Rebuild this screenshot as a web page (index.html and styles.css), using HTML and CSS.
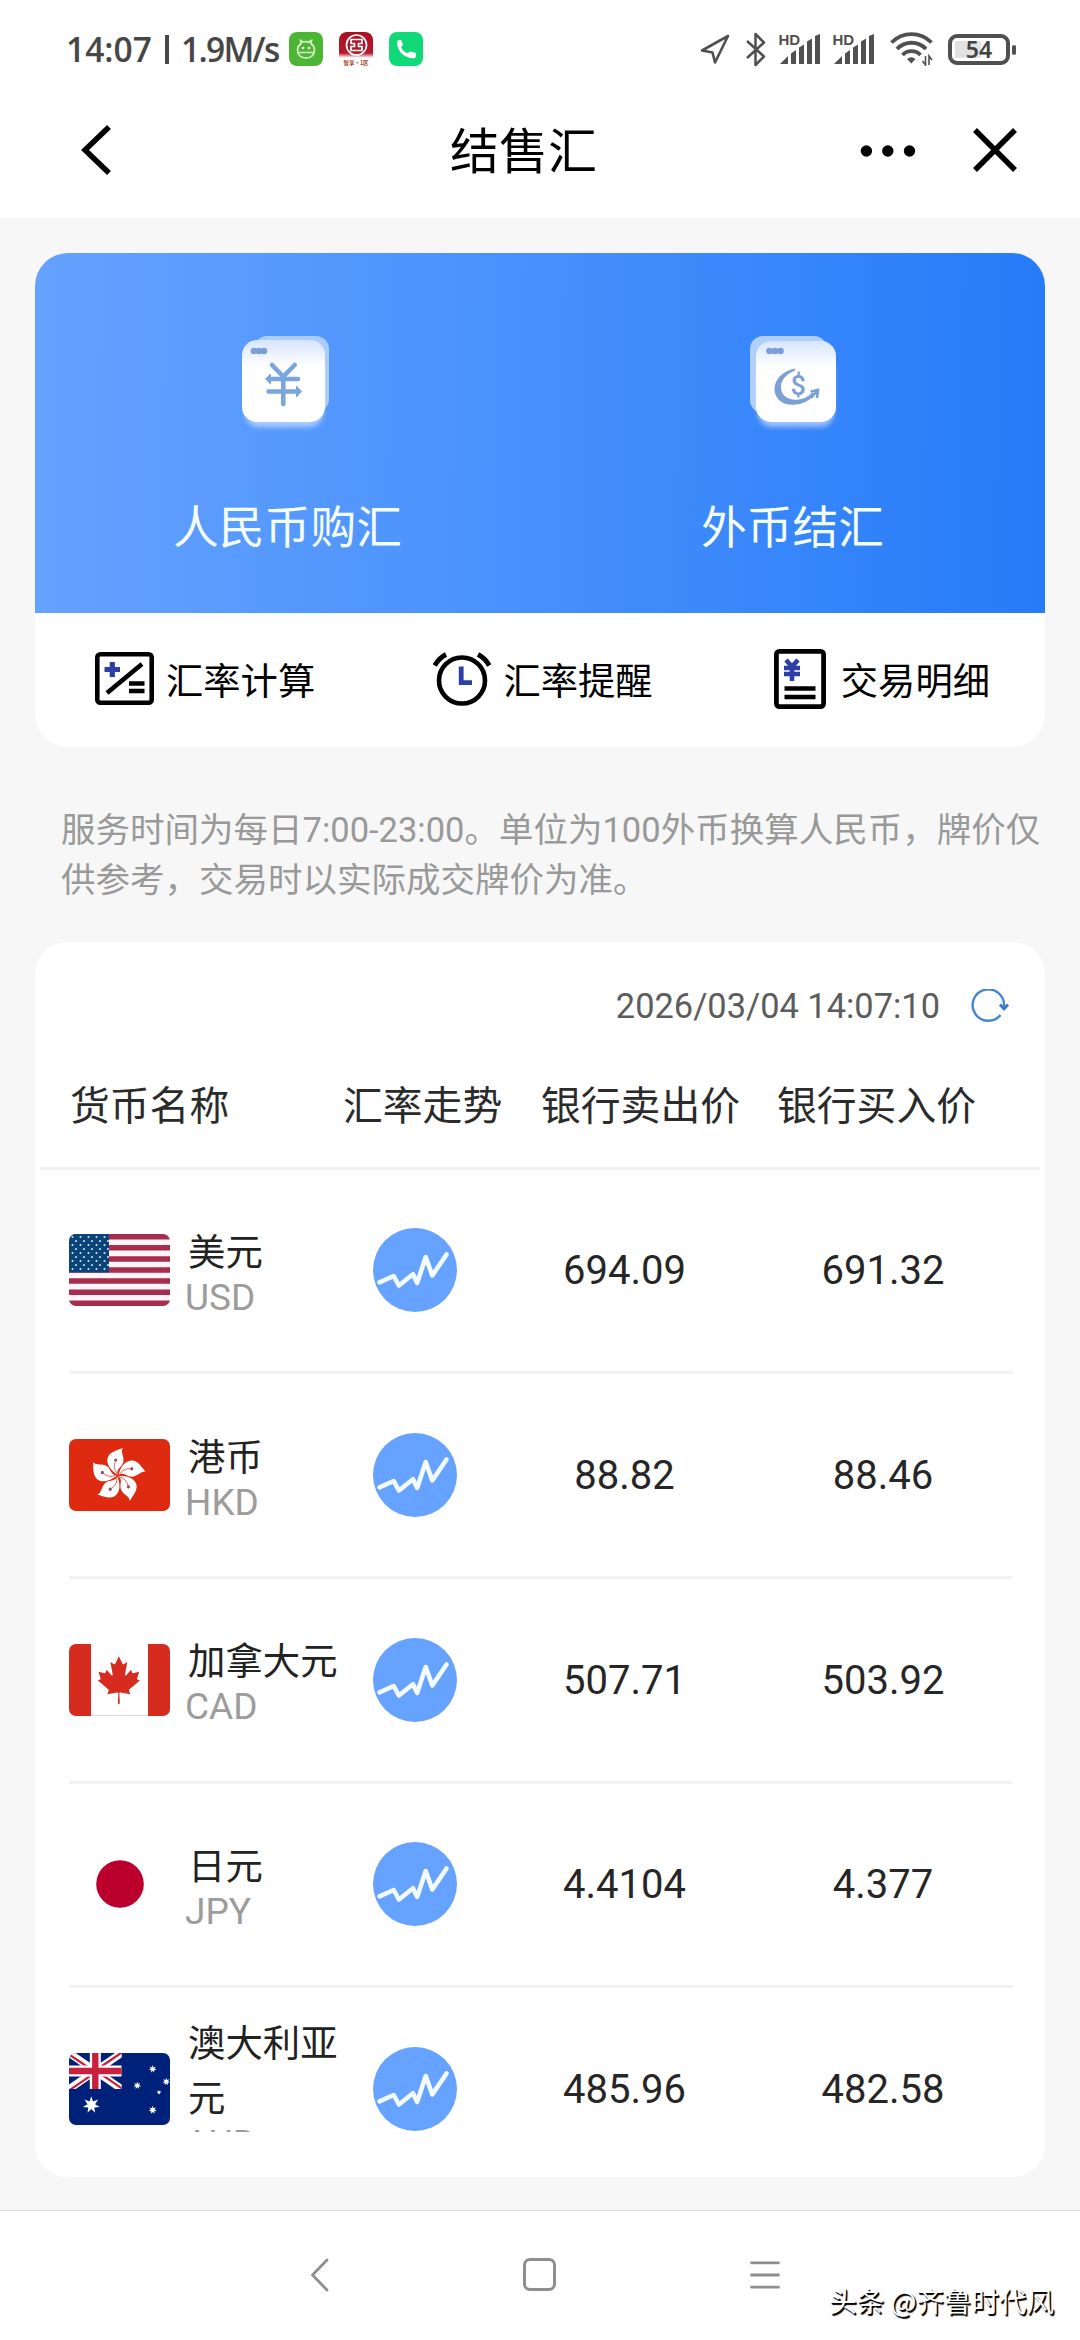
FILE: index.html
```html
<!DOCTYPE html>
<html lang="zh-CN">
<head>
<meta charset="utf-8">
<title>结售汇</title>
<link rel="stylesheet" href="styles.css">
</head>
<body>
<svg class="defs" width="0" height="0" aria-hidden="true">
  <defs>
    <linearGradient id="sheet" x1="0" y1="0" x2="0" y2="1">
      <stop offset="0" stop-color="#d6e5fd"/><stop offset=".32" stop-color="#fff"/>
    </linearGradient>
    <linearGradient id="bank" x1="0" y1="0" x2="0" y2="1">
      <stop offset="0" stop-color="#a80f22"/><stop offset=".62" stop-color="#b8182a"/><stop offset=".76" stop-color="#fff"/>
    </linearGradient>
    <filter id="soft" x="-20%" y="-20%" width="140%" height="140%"><feGaussianBlur stdDeviation="2.5"/></filter>
    <pattern id="stars" width="8" height="8" patternUnits="userSpaceOnUse">
      <circle cx="3.500" cy="3" r="1" fill="#d5e6f5"/><circle cx="7" cy="7" r="1" fill="#d5e6f5"/>
    </pattern>
    <clipPath id="flagclip"><rect width="101" height="72" rx="7"/></clipPath>
    <symbol id="trend" viewBox="0 0 84 84">
      <circle cx="42" cy="42" r="42" fill="#66a2ff"/>
      <path d="M6.500 54.300 20.700 48l5.200 9.500L40 46.300l4.200 8.600L52.700 29l6.600 18.500L73.500 26.500" fill="none" stroke="#f2fbff" stroke-width="4.600" stroke-linecap="round" stroke-linejoin="round"/>
    </symbol>
    <symbol id="signal" viewBox="0 0 42 32" overflow="visible">
      <path d="M1 31 9 23V31ZM12 20.500l5-3.500V31h-5ZM20 14.500l5-3V31h-5ZM28 8.500l5-3V31h-5ZM36 3l5-2V31h-5Z" fill="#505050"/>
      <text x="-.5" y="11.500" class="hd">HD</text>
    </symbol>
    <path id="star7" d="M0-1 .195-.405.782-.623.439-.1.975.223.352.281.434.901 0 .45-.434.901-.352.281-.975.223-.439-.1-.782-.623-.195-.405Z" fill="#fff"/>
    <g id="petal">
      <path d="M0-1C-6-4-13-12-9.500-19-7-24 0-25.500 5-27.500 2.500-23 7-19 5.500-13 4-8-2-7 0-1Z" fill="#fff"/>
      <path d="M0-2C-3.500-5-4.500-10-2-15" fill="none" stroke="#d9483a" stroke-width=".8"/>
      <circle cx="-2" cy="-15.500" r="1.600" fill="#8f4a6c"/>
    </g>
  </defs>
</svg>

<div class="screen">
  <div class="status">
    <span class="clock">14:07</span><span class="bar"></span><span class="speed">1.9M/s</span>
    <svg class="app" viewBox="0 0 34 34"><rect width="34" height="34" rx="8" fill="#4db534"/><g fill="none" stroke="#d8f5c8" stroke-width="1.700"><path d="M8.500 18a8.500 8.500 0 0 1 3.500-6.500L11.500 8.500l3 1.500a10 10 0 0 1 5 0l3-1.500-.5 3A8.500 8.500 0 0 1 25.500 18c0 5-3.500 8-8.500 8s-8.500-3-8.500-8ZM9 20.500h16"/></g><circle cx="14" cy="16" r="1.300" fill="#fff"/><circle cx="20" cy="16" r="1.300" fill="#fff"/></svg>
    <svg class="app" viewBox="0 0 34 34"><rect width="34" height="34" rx="8" fill="url(#bank)"/><g fill="none" stroke="#fff" stroke-width="1.700"><circle cx="17.500" cy="13" r="10"/><path d="M12 7.500h11v4h-3.500v3H23v4H12v-4h3.500v-3H12Z"/></g><text x="17" y="32.500" class="micro">智享·1区</text></svg>
    <svg class="app" viewBox="0 0 34 34"><rect width="34" height="34" rx="8" fill="#12d978"/><path d="M8 9.500c0-1.200 4-2 4.700-.8l1.300 4.500-2 1.800c1 3 3.500 5.300 6.800 6.300l2-1.800 5.500 1.200c1.200.4.8 5-.5 5.300C16.500 27.500 7.500 19.500 8 9.500Z" fill="#fff"/></svg>
    <svg class="loc" viewBox="0 0 30 31"><path d="M28 2 2 16.500l10.500 2L15 28.500Z" fill="none" stroke="#505050" stroke-width="2.600" stroke-linejoin="round"/></svg>
    <svg class="bt" viewBox="0 0 22 35"><path d="M2 9l17 15.500L10.500 33V2L19 10.500 2 26" fill="none" stroke="#505050" stroke-width="2.500" stroke-linejoin="round"/></svg>
    <svg class="sig"><use href="#signal"/></svg>
    <svg class="sig"><use href="#signal"/></svg>
    <svg class="wifi" viewBox="0 0 43 34"><g fill="none" stroke="#505050" stroke-width="3.800"><path d="M1.500 10.500a28 28 0 0 1 40 0M7 17a20 20 0 0 1 29 0M12.500 23a12.500 12.500 0 0 1 18 0"/></g><path d="M17 27q4.500-3.500 8.500 0l-4.200 4.500Z" fill="#505050"/><path d="M35.500 24v9l-3-4M39 33v-9l3 4" fill="none" stroke="#505050" stroke-width="1.600"/></svg>
    <span class="battery"><span class="pct">54</span></span>
  </div>

  <header class="titlebar">
    <svg class="back" viewBox="0 0 31 52"><path d="M28 3 4 26l24 23" fill="none" stroke="#000" stroke-width="5.500"/></svg>
    <h1>结售汇</h1>
    <svg class="more" viewBox="0 0 56 12"><circle cx="6.400" cy="6" r="5.700"/><circle cx="27.800" cy="6" r="5.700"/><circle cx="49.500" cy="6" r="5.700"/></svg>
    <svg class="close" viewBox="0 0 44 44"><path d="M2 2l40 40M42 2 2 42" stroke="#000" stroke-width="5.500"/></svg>
  </header>

  <main>
    <section class="card trade">
      <div class="hero">
        <div class="tile">
          <svg class="tile-icon first" viewBox="0 0 88 98"><rect x="3" y="20" width="78" height="71" rx="14" fill="#fff" opacity=".5" filter="url(#soft)"/><rect x="12" y="0" width="75" height="76" rx="13" fill="#fff" opacity=".5"/><rect y="4" width="83" height="82" rx="15" fill="url(#sheet)"/><g fill="#7b9edb"><circle cx="12" cy="15" r="3.300"/><circle cx="17" cy="15" r="3.300"/><circle cx="22" cy="15" r="3.300"/></g><path d="M30 29l11.300 11.500L52.700 29M41.300 40v28M28 43h28M26.500 55.500h28" fill="none" stroke="#7aa5dd" stroke-width="4.600" stroke-linecap="round"/><path d="M23.500 43l5-5v10ZM59.500 55.500l-5-5.500v11Z" fill="#7aa5dd" stroke="#7aa5dd" stroke-linejoin="round"/></svg>
          <span>人民币购汇</span>
        </div>
        <div class="tile">
          <svg class="tile-icon" viewBox="0 0 88 98"><rect x="8" y="20" width="76" height="71" rx="14" fill="#fff" opacity=".5" filter="url(#soft)"/><rect width="77" height="77" rx="13" fill="#fff" opacity=".6"/><rect x="6" y="5" width="80" height="81" rx="15" fill="url(#sheet)"/><g fill="#7b9edb"><circle cx="19.500" cy="15" r="3.300"/><circle cx="25" cy="15" r="3.300"/><circle cx="30.500" cy="15" r="3.300"/></g><path d="M45 32.500C32 35 24.500 44 24.500 53c0 10 8 16 18.500 15.800 9-.2 17.500-4.300 21.500-10.800l-2-1.500C58 61 53 63.500 47 63.700 37 64 31 59 31 51c0-7 5-13 14-16.500Z" fill="#7aa0d4"/><path d="M60.500 55.500l7.500-1.500-1 8M67.500 54.500 61 62" fill="none" stroke="#7aa0d4" stroke-width="2.600"/><text x="48.300" y="59" class="dollar">$</text></svg>
          <span>外币结汇</span>
        </div>
      </div>
      <nav class="actions">
        <a class="action"><svg width="59" height="53" viewBox="0 0 59 53"><rect x="2.300" y="2.300" width="54.400" height="48.400" rx="3" fill="none" stroke="#000" stroke-width="4.600"/><path d="M12 41 47 12" stroke="#000" stroke-width="4.600"/><path d="M34 31.500h15.500M34 39h15.500" stroke="#000" stroke-width="4.600"/><path d="M9.500 17.500h15.500M17.300 10v15" stroke="#2b3fa6" stroke-width="5.200"/></svg><span>汇率计算</span></a>
        <a class="action mid"><svg width="58" height="54" viewBox="0 0 58 54"><circle cx="29" cy="28.500" r="23" fill="none" stroke="#000" stroke-width="4.600"/><path d="M1.800 13.500Q6 6 13 2.500M56.200 13.500Q52 6 45 2.500" fill="none" stroke="#000" stroke-width="4.800"/><path d="M28.200 14.500v16.200H39" fill="none" stroke="#2b3fa6" stroke-width="4.800"/></svg><span>汇率提醒</span></a>
        <a class="action wide"><svg width="52" height="60" viewBox="0 0 52 60"><rect x="2.400" y="2.400" width="47.200" height="55.200" rx="3" fill="none" stroke="#000" stroke-width="4.800"/><path d="M10.500 39.500h31M10.500 48h31" stroke="#000" stroke-width="4.600"/><path d="M12 11l6 6.500 6-6.500M10 19h16M10 25h16M18 17v15" fill="none" stroke="#2b3fa6" stroke-width="4.600"/></svg><span>交易明细</span></a>
      </nav>
    </section>

    <p class="notice">服务时间为每日7:00-23:00。单位为100外币换算人民币，牌价仅<br>供参考，交易时以实际成交牌价为准。</p>

    <section class="card rates">
      <div class="stamp"><time>2026/03/04 14:07:10</time><svg width="39" height="34" viewBox="0 0 39 34"><path d="M30.500 26A15.700 15.700 0 1 1 34 17v2" fill="none" stroke="#4585cf" stroke-width="2.400"/><path d="M30 15.500l4 4.500 4-4.500" fill="none" stroke="#3b77cc" stroke-width="2.800"/></svg></div>
      <div class="cols head"><span>货币名称</span><span>汇率走势</span><span>银行卖出价</span><span>银行买入价</span></div>
      <div class="list">
        <div class="cols row">
          <div class="cur"><svg class="flag" viewBox="0 0 101 72"><g clip-path="url(#flagclip)"><rect width="101" height="72" fill="#fff5f8"/><path d="M0 2.770h101M0 13.850h101M0 24.930h101M0 36h101M0 47.080h101M0 58.160h101M0 69.240h101" stroke="#a62e4c" stroke-width="5.540"/><rect width="40" height="38.500" fill="#0b4479"/><rect width="40" height="37" fill="url(#stars)"/></g></svg><div class="label"><b>美元</b><i>USD</i></div></div>
          <svg class="trend"><use href="#trend"/></svg><span class="num">694.09</span><span class="num">691.32</span>
        </div>
        <div class="cols row">
          <div class="cur"><svg class="flag" viewBox="0 0 101 72"><rect width="101" height="72" rx="7" fill="#de2a10"/><g transform="translate(48.700 36.500)"><use href="#petal"/><use href="#petal" transform="rotate(72)"/><use href="#petal" transform="rotate(144)"/><use href="#petal" transform="rotate(216)"/><use href="#petal" transform="rotate(288)"/></g></svg><div class="label"><b>港币</b><i>HKD</i></div></div>
          <svg class="trend"><use href="#trend"/></svg><span class="num">88.82</span><span class="num">88.46</span>
        </div>
        <div class="cols row">
          <div class="cur"><svg class="flag" viewBox="0 0 101 72"><g clip-path="url(#flagclip)"><rect width="101" height="72" fill="#fff"/><path d="M22 71.600h57" stroke="#ccc" stroke-width=".8"/><path d="M0 0h22v72H0ZM79 0h22v72H79Z" fill="#d52c1f"/><path transform="translate(-4.400 7.650) scale(.0113 .01175)" fill="#d52c1f" d="m4890 4430-45-863a95 95 0 0 1 111-98l859 151-116-320a65 65 0 0 1 20-73l941-762-212-99a65 65 0 0 1-34-79l186-572-542 115a65 65 0 0 1-73-38l-105-247-423 454a65 65 0 0 1-111-57l204-1052-327 189a65 65 0 0 1-91-27l-332-652-332 652a65 65 0 0 1-91 27l-327-189 204 1052a65 65 0 0 1-111 57l-423-454-105 247a65 65 0 0 1-73 38l-542-115 186 572a65 65 0 0 1-34 79l-212 99 941 762a65 65 0 0 1 20 73l-116 320 859-151a95 95 0 0 1 111 98l-45 863z"/></g></svg><div class="label"><b>加拿大元</b><i>CAD</i></div></div>
          <svg class="trend"><use href="#trend"/></svg><span class="num">507.71</span><span class="num">503.92</span>
        </div>
        <div class="cols row">
          <div class="cur"><svg class="flag" viewBox="0 0 101 72"><rect width="101" height="72" rx="7" fill="#fff"/><circle cx="51" cy="36" r="23.800" fill="#bc002d"/></svg><div class="label"><b>日元</b><i>JPY</i></div></div>
          <svg class="trend"><use href="#trend"/></svg><span class="num">4.4104</span><span class="num">4.377</span>
        </div>
        <div class="cols row">
          <div class="cur"><svg class="flag" viewBox="0 0 101 72"><g clip-path="url(#flagclip)"><rect width="101" height="72" fill="#00217a"/><svg width="52.700" height="36" viewBox="0 0 52.700 36"><path d="M0 0l52.700 36M52.700 0 0 36" stroke="#fff" stroke-width="7.500"/><path d="M0 1.500 23 17M0 37.500l24-16.400M30 15 52.700-.5M29 19l24 16.500" stroke="#c8213f" stroke-width="2.200"/><path d="M26.300 0v36M0 18h52.700" stroke="#fff" stroke-width="11"/><path d="M26.300 0v36M0 18h52.700" stroke="#c8213f" stroke-width="6.400"/></svg><use href="#star7" transform="translate(22.300 52) scale(8.700)"/><use href="#star7" transform="translate(83.700 16) scale(4)"/><use href="#star7" transform="translate(97.300 28.700) scale(4)"/><use href="#star7" transform="translate(68.300 32.500) scale(4)"/><use href="#star7" transform="translate(90 39.300) scale(2.400)"/><use href="#star7" transform="translate(83.700 57) scale(4.200)"/></g></svg><div class="label"><b>澳大利亚元</b><i>AUD</i></div></div>
          <svg class="trend"><use href="#trend"/></svg><span class="num">485.96</span><span class="num">482.58</span>
        </div>
      </div>
    </section>
  </main>

  <footer class="sysnav">
    <svg class="nav-back" viewBox="0 0 19 34"><path d="M17 2 2.500 17 17 32" fill="none" stroke="#8e8e8e" stroke-width="2.800" stroke-linecap="round" stroke-linejoin="round"/></svg>
    <span class="nav-home"></span>
    <svg class="nav-menu" viewBox="0 0 30 28"><path d="M1.500 1.800h27M1.500 14h27M1.500 26.200h27" stroke="#8e8e8e" stroke-width="2.800" stroke-linecap="round"/></svg>
    <span class="credit">头条 @齐鲁时代风</span>
  </footer>
</div>
</body>
</html>
```
FILE: styles.css
```css
* { box-sizing: border-box; }
body {
  margin: 0;
  background: #fff;
  color: #000;
  font-family: Roboto, "Noto Sans CJK SC", sans-serif;
}
svg { display: block; flex: none; }
.defs { position: absolute; }

.screen {
  width: 1080px;
  height: 2340px;
  display: flex;
  flex-direction: column;
  background: #f7f7f7;
  overflow: hidden;
}

/* system status bar */
.status {
  height: 84px;
  padding: 14px 64px 0 66px;
  display: flex;
  align-items: center;
  background: #fff;
  color: #474747;
  font: 600 33.500px/40px "Open Sans", sans-serif;
}
.clock { width: 99px; }
.bar { width: 4px; height: 29px; background: #474747; margin-right: 12px; }
.speed { width: 108px; letter-spacing: -1.700px; }
.app { width: 34px; height: 34px; margin-right: 16px; }
.micro { font: 700 5.500px "Noto Sans CJK SC", sans-serif; fill: #a5402c; text-anchor: middle; }
.loc { width: 30px; height: 31px; margin-left: auto; margin-right: 15px; }
.bt { width: 22px; height: 35px; margin-right: 12px; }
.sig { width: 42px; height: 32px; margin-right: 12px; overflow: visible; }
.hd { font: 700 15px "Liberation Sans", sans-serif; fill: #505050; }
.wifi { width: 43px; height: 34px; margin: 0 15px 0 3px; }
.battery {
  position: relative;
  width: 62px;
  height: 31px;
  margin-right: 6px;
  border: 4px solid #505050;
  border-radius: 9px;
  background: linear-gradient(90deg, #e2e2e2 55%, #fff 55%) 3px 3px / 48px 17px no-repeat;
  display: flex;
  align-items: center;
  justify-content: center;
}
.battery::after {
  content: "";
  position: absolute;
  left: 60px;
  top: 7px;
  width: 4px;
  height: 10px;
  border-radius: 2px;
  background: #505050;
}
.pct { font: 600 23px/23px "Noto Sans", sans-serif; color: #444; }

/* page title bar */
.titlebar {
  height: 134px;
  padding: 0 63.500px 0 81px;
  display: flex;
  align-items: center;
  background: #fff;
}
.back { width: 31px; height: 52px; margin-top: -3px; }
.titlebar h1 {
  width: 160px;
  margin: -6px 0 0 338px;
  font: 400 49px/60px "Noto Sans CJK SC", sans-serif;
}
.more { width: 56px; height: 12px; margin-left: auto; margin-right: 57px; }
.close { width: 44px; height: 44px; margin-top: -3px; }

main { flex: 1; padding: 35px 35px 0; }
.card { width: 1010px; background: #fff; border-radius: 33px; overflow: hidden; }

.trade { height: 494px; }
.hero {
  height: 360px;
  display: grid;
  grid-template-columns: 1fr 1fr;
  background: linear-gradient(91deg, #65a2ff, #4790fc 50%, #267bf9);
}
.tile {
  padding-top: 83px;
  display: flex;
  flex-direction: column;
  align-items: center;
  color: #f4fdff;
  font: 400 45.800px/60px "Noto Sans CJK SC", sans-serif;
}
.tile-icon { width: 88px; height: 98px; margin-bottom: 60px; margin-left: 2px; }
.tile-icon.first { margin-left: 0; margin-right: 4px; }
.dollar { font: 500 27px Roboto, sans-serif; fill: #7aa0d4; text-anchor: middle; }

.actions {
  height: 134px;
  padding: 0 55px 3px 60px;
  display: flex;
  justify-content: space-between;
  align-items: center;
  font: 400 37.300px/50px "Noto Sans CJK SC", sans-serif;
}
.action { display: flex; align-items: center; gap: 12px; }
.action.mid { margin-left: -3px; }
.action.wide { gap: 15px; }

.notice {
  margin: 58px 0 0 26px;
  color: #999;
  font-size: 34.500px;
  line-height: 50px;
  white-space: nowrap;
}

.rates { height: 1235px; margin-top: 37px; }
.stamp {
  height: 128px;
  padding: 0 36px 0 0;
  display: flex;
  align-items: center;
  justify-content: flex-end;
  gap: 30px;
  color: #5c5c5c;
  font-size: 34.400px;
}
.cols {
  display: grid;
  grid-template-columns: 275px 142px 277px 240px;
  align-items: center;
  justify-items: center;
}
.head {
  height: 99.500px;
  margin: 0 5px;
  padding: 0 0 30px 30px;
  grid-template-columns: 273px 198px 236px 1fr;
  justify-items: start;
  border-bottom: 3px solid #f0f0f0;
  color: #2b2b2b;
  font: 400 39.800px/50px "Noto Sans CJK SC", sans-serif;
}
.list { height: 962px; margin: 0 32px 0 34px; overflow: hidden; }
.row { height: 204.700px; border-bottom: 3px solid #f2f2f2; }
.cur { justify-self: start; display: flex; align-items: center; gap: 15px; }
.flag { width: 101px; height: 72px; }
.label { width: 158px; display: flex; flex-direction: column; }
.label b {
  padding-left: 3px;
  color: #222;
  font: 400 37.400px/55px "Noto Sans CJK SC", sans-serif;
}
.label i { color: #9c9c9c; font: 400 37px/40px Roboto, sans-serif; }
.trend { width: 84px; height: 84px; }
.num { padding-top: 2px; color: #262626; font-size: 40px; line-height: 50px; }

/* system navigation */
.sysnav {
  height: 130px;
  padding: 0 26px 2px 310px;
  display: flex;
  align-items: center;
  border-top: 1px solid #dcdcdc;
  background: #fff;
}
.nav-back { width: 19px; height: 34px; }
.nav-home {
  width: 33px;
  height: 33px;
  margin: 0 194px;
  border: 3.500px solid #8e8e8e;
  border-radius: 7px;
}
.nav-menu { width: 30px; height: 28px; }
.credit {
  margin: 50px 0 0 auto;
  color: #fff;
  font: 400 27.500px/40px "Noto Sans CJK SC", sans-serif;
  text-shadow: 1.500px 1.500px 1px #000, 1px 1px 0 #000;
  white-space: nowrap;
}
```
